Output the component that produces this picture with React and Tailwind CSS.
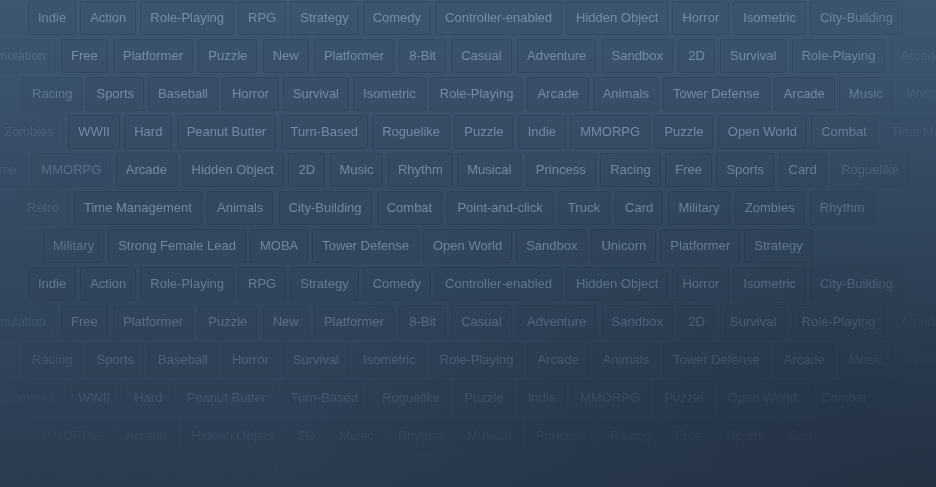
import React from 'react';

// each tag: [label, opacity class]
const rows = [
    {
        shift: 'ml-[28px] gap-[4px]',
        tags: [['Indie'], ['Action'], ['Role-Playing'], ['RPG'], ['Strategy'], ['Comedy'], ['Controller-enabled'], ['Hidden Object'], ['Horror'], ['Isometric'], ['City-Building', 'opacity-85']],
    },
    {
        shift: 'ml-[-25px] gap-[5.3px]',
        tags: [['Simulation', 'opacity-50'], ['Free'], ['Platformer'], ['Puzzle'], ['New'], ['Platformer'], ['8-Bit'], ['Casual'], ['Adventure'], ['Sandbox'], ['2D'], ['Survival'], ['Role-Playing', 'opacity-90'], ['Arcade', 'opacity-30']],
    },
    {
        shift: 'ml-[22px] gap-[4px]',
        tags: [['Racing', 'opacity-75'], ['Sports'], ['Baseball'], ['Horror'], ['Survival'], ['Isometric'], ['Role-Playing'], ['Arcade'], ['Animals'], ['Tower Defense'], ['Arcade'], ['Music', 'opacity-80'], ['WWII', 'opacity-25']],
    },
    {
        shift: 'ml-[-6px] gap-[4.3px]',
        tags: [['Zombies', 'opacity-35'], ['WWII'], ['Hard'], ['Peanut Butter'], ['Turn-Based'], ['Roguelike'], ['Puzzle'], ['Indie'], ['MMORPG'], ['Puzzle'], ['Open World'], ['Combat', 'opacity-85'], ['Time Management', 'opacity-25']],
    },
    {
        shift: 'ml-[-30px] gap-[4.5px]',
        tags: [['Anime', 'opacity-30'], ['MMORPG', 'opacity-60'], ['Arcade'], ['Hidden Object'], ['2D'], ['Music'], ['Rhythm'], ['Musical'], ['Princess'], ['Racing'], ['Free'], ['Sports'], ['Card', 'opacity-90'], ['Roguelike', 'opacity-45']],
    },
    {
        shift: 'ml-[17px] gap-[5.2px]',
        tags: [['Retro', 'opacity-40'], ['Time Management'], ['Animals'], ['City-Building'], ['Combat'], ['Point-and-click'], ['Truck'], ['Card'], ['Military'], ['Zombies'], ['Rhythm', 'opacity-75']],
    },
    {
        shift: 'ml-[43px] gap-[4px]',
        tags: [['Military', 'opacity-70'], ['Strong Female Lead'], ['MOBA'], ['Tower Defense'], ['Open World'], ['Sandbox'], ['Unicorn'], ['Platformer'], ['Strategy']],
    },
];

// pattern repeats every 7 rows
const allRows = [...rows, ...rows];

function Tag({ label, fade }) {
    return (
        <div className={`h-[34px] shrink-0 px-[9px] flex items-center rounded-[3px] border border-black/10 bg-black/[0.03] text-[13px] text-[#a4bcd6]/55 whitespace-nowrap ${fade || ''}`}>
            {label}
        </div>
    );
}

export default function App() {
    return (
        <div className="relative w-full h-[487px] overflow-hidden bg-linear-to-b from-[#3e5771] to-[#2b3c50] font-['Liberation_Sans',Arial,sans-serif]">
            {/* Tag cloud, faded toward the bottom */}
            <div className="h-full pt-px [mask-image:linear-gradient(to_bottom,#000_0%,#000_50%,rgba(0,0,0,0.55)_70%,rgba(0,0,0,0.14)_89%,transparent_98%)]">
                <div className="h-full [mask-image:radial-gradient(ellipse_50%_70%_at_100%_100%,rgba(0,0,0,0.7),#000)]">
                    <div className="h-full flex flex-col gap-1 [mask-image:linear-gradient(to_right,rgba(0,0,0,0.7)_0%,#000_8%,#000_90%,rgba(0,0,0,0.6)_100%)]">
                        {allRows.map((row, i) => (
                            <div key={i} className={`flex ${row.shift}`}>
                                {row.tags.map(([t, fade], j) => (
                                    <Tag key={j} label={t} fade={fade} />
                                ))}
                            </div>
                        ))}
                    </div>
                </div>
            </div>

            {/* Darker corner bottom right */}
            <div className="absolute inset-0 pointer-events-none bg-[radial-gradient(ellipse_70%_80%_at_100%_100%,rgba(20,30,42,0.35),transparent)]" />
        </div>
    );
}
